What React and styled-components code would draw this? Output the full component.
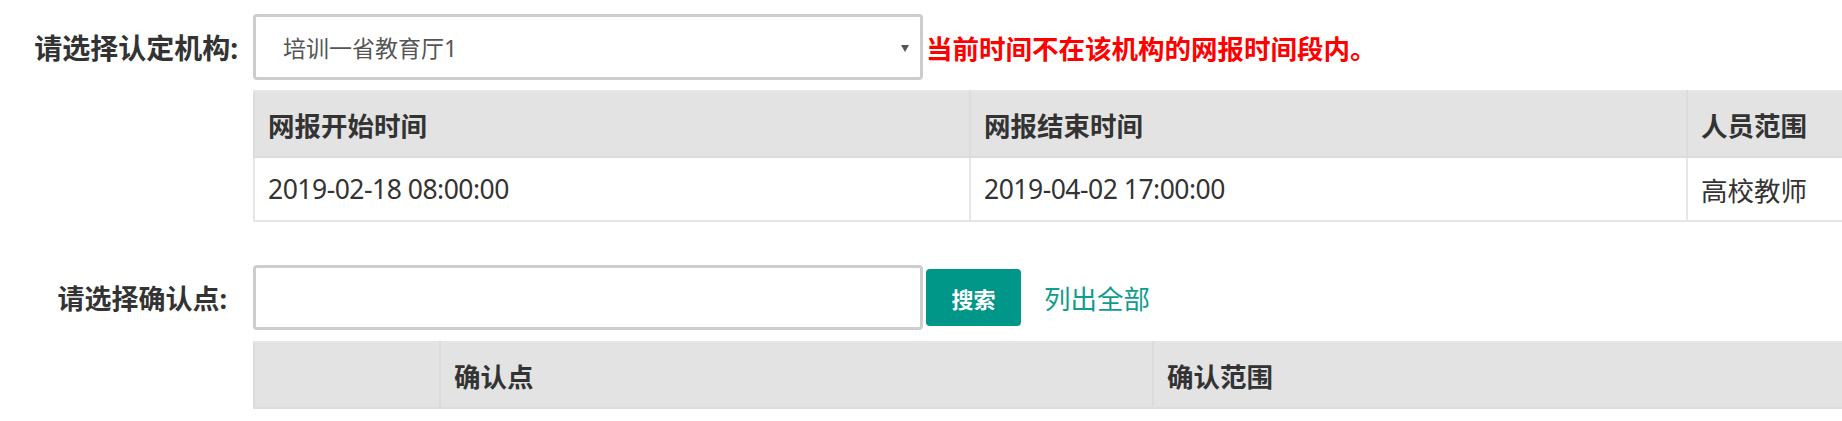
import React from "react";
import styled, { createGlobalStyle } from "styled-components";

const GlobalStyle = createGlobalStyle`
  html, body {
    margin: 0;
    padding: 0;
    background: #fff;
    overflow: hidden;
  }
  body {
    font-family: "Noto Sans", "Noto Sans CJK SC", sans-serif;
    color: #333;
  }
`;

const Page = styled.div`
  padding-top: 14px;
  width: 2600px;
`;

const FormRow = styled.div`
  display: flex;
  align-items: center;
  margin-top: ${(p) => p.$top || 0}px;
`;

const Label = styled.label`
  width: 253px;
  box-sizing: border-box;
  padding-right: ${(p) => p.$pad}px;
  text-align: right;
  font-size: ${(p) => p.$size}px;
  font-weight: 700;
  color: #333;
  white-space: nowrap;
`;

const SelectBox = styled.div`
  width: 670px;
  height: 66px;
  box-sizing: border-box;
  border: 3px solid #cdcdcd;
  border-radius: 4px;
  display: flex;
  align-items: center;
  justify-content: space-between;
  padding: 0 11px 0 27px;
  font-size: 23px;
  color: #555;
`;

const Caret = styled.span`
  width: 0;
  height: 0;
  border-left: 4px solid transparent;
  border-right: 4px solid transparent;
  border-top: 7px solid #555;
  margin-top: 2px;
`;

const ErrorText = styled.span`
  margin-left: 3px;
  font-size: 26.5px;
  font-weight: 700;
  color: #ff0000;
  white-space: nowrap;
`;

const TextInput = styled.input`
  width: 670px;
  height: 65px;
  box-sizing: border-box;
  border: 3px solid #cdcdcd;
  border-radius: 4px;
  padding: 0 20px;
  font-size: 23px;
  outline: none;
`;

const Button = styled.button`
  margin-left: 3px;
  width: 95px;
  height: 57px;
  border: none;
  border-radius: 4px;
  background: #009688;
  color: #fff;
  font-family: "Noto Sans", "Noto Sans CJK SC", sans-serif;
  font-size: 22px;
  font-weight: 700;
  padding: 0;
`;

const LinkText = styled.a`
  margin-left: 23px;
  font-size: 26.5px;
  color: #129c8d;
  text-decoration: none;
  white-space: nowrap;
`;

const Table = styled.table`
  margin-left: 253px;
  margin-top: ${(p) => p.$top}px;
  border-collapse: collapse;
  table-layout: fixed;
  border: 2px solid #e6e6e6;
`;

const Th = styled.th`
  width: ${(p) => p.$w}px;
  height: 66px;
  box-sizing: border-box;
  padding: 0 13px;
  background: #e3e3e3;
  border: 2px solid #dcdcdc;
  border-top-color: #e6e6e6;
  text-align: left;
  font-size: 26.5px;
  font-weight: 700;
  color: #333;
  white-space: nowrap;
`;

const Td = styled.td`
  height: 64px;
  box-sizing: border-box;
  padding: 0 13px;
  border: 2px solid #e6e6e6;
  font-size: 26.5px;
  letter-spacing: ${(p) => (p.$tight ? "-0.5px" : "0")};
  color: #333;
  white-space: nowrap;
`;

export default function App() {
  return (
    <>
      <GlobalStyle />
      <Page>
        <FormRow>
          <Label $pad={15} $size={28}>请选择认定机构:</Label>
          <SelectBox>
            <span>培训一省教育厅1</span>
            <Caret />
          </SelectBox>
          <ErrorText>当前时间不在该机构的网报时间段内。</ErrorText>
        </FormRow>

        <Table $top={10}>
          <thead>
            <tr>
              <Th $w={716}>网报开始时间</Th>
              <Th $w={717}>网报结束时间</Th>
              <Th $w={717}>人员范围</Th>
            </tr>
          </thead>
          <tbody>
            <tr>
              <Td $tight>2019-02-18 08:00:00</Td>
              <Td $tight>2019-04-02 17:00:00</Td>
              <Td>高校教师</Td>
            </tr>
          </tbody>
        </Table>

        <FormRow $top={43}>
          <Label $pad={26} $size={27}>请选择确认点:</Label>
          <TextInput type="text" />
          <Button type="button">搜索</Button>
          <LinkText href="#">列出全部</LinkText>
        </FormRow>

        <Table $top={11}>
          <thead>
            <tr>
              <Th $w={186}></Th>
              <Th $w={713}>确认点</Th>
              <Th $w={713}>确认范围</Th>
            </tr>
          </thead>
        </Table>
      </Page>
    </>
  );
}
